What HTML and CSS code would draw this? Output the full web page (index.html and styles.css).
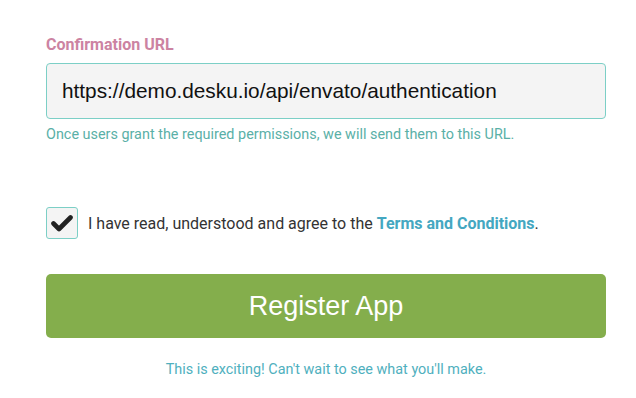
FILE: index.html
```html
<!DOCTYPE html>
<html lang="en">
<head>
    <meta charset="UTF-8">
    <meta name="viewport" content="width=device-width, initial-scale=1.0">
    <title>Register App</title>
    <link rel="stylesheet" href="styles.css">
</head>
<body>

<div class="form">
    <label class="field-label" for="confirmUrl">Confirmation URL</label>
    <input class="field-input" id="confirmUrl" type="text" value="https://demo.desku.io/api/envato/authentication">
    <p class="field-help">Once users grant the required permissions, we will send them to this URL.</p>

    <div class="agree-row">
        <span class="check-box">
            <svg width="22" height="18" viewBox="0 0 22 18">
                <path d="M2.5 9.5 L8 15 L19.5 3.5" fill="none" stroke="#222" stroke-width="4.6" stroke-linecap="round" stroke-linejoin="round"/>
            </svg>
        </span>
        <span class="agree-text">I have read, understood and agree to the <a href="#">Terms and Conditions</a>.</span>
    </div>

    <button class="register-button">Register App</button>

    <p class="footer-note">This is exciting! Can't wait to see what you'll make.</p>
</div>

</body>
</html>
```

FILE: styles.css
```css
* {
    margin: 0;
    padding: 0;
    box-sizing: border-box;
}

body {
    background: #ffffff;
    font-family: Roboto, "Liberation Sans", sans-serif;
}

.form {
    display: flex;
    flex-direction: column;
    width: 560px;
    margin-left: 46px;
    padding-top: 36px;
}

.field-label {
    font-size: 16px;
    font-weight: bold;
    color: #cc83a2;
    line-height: 18px;
}

.field-input {
    margin-top: 9px;
    height: 56px;
    width: 100%;
    background: #f4f4f4;
    border: 1px solid #7ccfc6;
    border-radius: 4px;
    padding: 0 15px;
    font-family: "Liberation Sans", Arial, sans-serif;
    font-size: 20.8px;
    color: #111;
    outline: none;
}

.field-help {
    margin-top: 7px;
    font-size: 14.4px;
    line-height: 17px;
    color: #5ab0a7;
}

.agree-row {
    display: flex;
    align-items: center;
    gap: 10px;
    margin-top: 64px;
}

.check-box {
    display: flex;
    justify-content: center;
    align-items: center;
    width: 32px;
    height: 32px;
    background: #f4f4f4;
    border: 1px solid #7ccfc6;
    border-radius: 3px;
}

.agree-text {
    font-size: 16px;
    color: #333;
}

.agree-text a {
    text-decoration: none;
    font-weight: bold;
    color: #44a7c1;
}

.register-button {
    margin-top: 35px;
    height: 64px;
    width: 100%;
    background: #84ae4c;
    border: none;
    border-radius: 5px;
    color: #fff;
    font-family: "Liberation Sans", Arial, sans-serif;
    font-size: 27px;
    cursor: pointer;
}

.footer-note {
    margin-top: 23px;
    text-align: center;
    font-size: 14.4px;
    line-height: 17px;
    color: #4fb0be;
}
```
